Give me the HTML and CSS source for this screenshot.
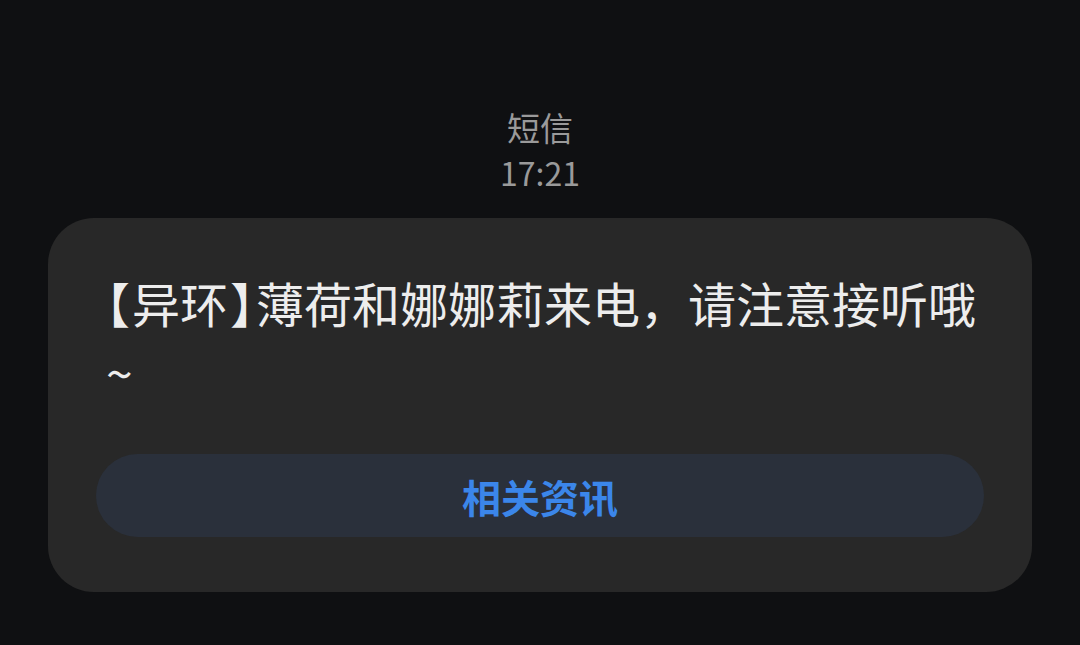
FILE: index.html
```html
<!DOCTYPE html>
<html lang="zh-CN">
<head>
<meta charset="utf-8">
<link rel="stylesheet" href="styles.css">
</head>
<body>
<div class="page">
  <div class="header">
    <div class="title">短信</div>
    <div class="time">17:21</div>
  </div>
  <div class="card">
    <div class="message"><span class="br open">【</span>异环<span class="br close">】</span>薄荷和娜娜莉来电，请注意接听哦~</div>
    <div class="button">相关资讯</div>
  </div>
</div>
</body>
</html>
```
FILE: styles.css
```css
html, body {
  margin: 0;
  padding: 0;
  background: #0f1012;
}
body {
  width: 1080px;
  height: 645px;
  overflow: hidden;
  font-family: "Noto Sans CJK SC", "Noto Sans", sans-serif;
}
.page {
  display: flex;
  flex-direction: column;
  align-items: center;
  padding-top: 105px;
}
.header {
  display: flex;
  flex-direction: column;
  align-items: center;
  color: #9a9a9a;
  font-size: 33px;
  line-height: 45px;
}
.time {
  font-size: 32px;
}
.card {
  margin-top: 23px;
  width: 984px;
  box-sizing: border-box;
  background: #282828;
  border-radius: 46px;
  padding: 50px 48px 55px 48px;
  display: flex;
  flex-direction: column;
}
.message {
  color: #ededed;
  font-size: 48px;
  line-height: 69px;
  padding-left: 10px;
  margin-right: 2px;
}
.br {
  font-feature-settings: "halt";
}
.open {
  margin-right: 2px;
}
.close {
  margin-left: 2px;
  margin-right: 2px;
}
.button {
  margin-top: 48px;
  height: 83px;
  border-radius: 42px;
  background: #2a303b;
  color: #3b86ea;
  font-size: 39px;
  font-weight: bold;
  display: flex;
  align-items: center;
  justify-content: center;
}
```
